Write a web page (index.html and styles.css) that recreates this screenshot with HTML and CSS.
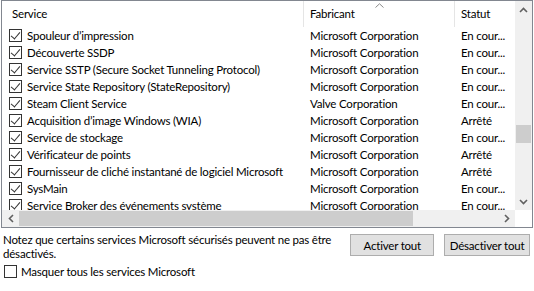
FILE: index.html
```html
<!DOCTYPE html>
<html lang="fr">
<head>
    <meta charset="UTF-8">
    <title>Services</title>
    <link rel="stylesheet" href="styles.css">
</head>
<body>

<div class="listbox">
    <div class="list">
        <div class="header">
            <div class="col col-name">Service</div>
            <div class="col col-maker">Fabricant
                <svg class="sort" width="9" height="5" viewBox="0 0 9 5"><path d="M0.5 4.5 L4.5 0.8 L8.5 4.5" fill="none" stroke="#8a8a8a" stroke-width="1"/></svg>
            </div>
            <div class="col col-state">Statut</div>
        </div>
        <div class="rows">
            <div class="row"><div class="col col-name"><span class="check on"></span>Spouleur d’impression</div><div class="col col-maker">Microsoft Corporation</div><div class="col col-state">En cour...</div></div>
            <div class="row"><div class="col col-name"><span class="check on"></span>Découverte SSDP</div><div class="col col-maker">Microsoft Corporation</div><div class="col col-state">En cour...</div></div>
            <div class="row"><div class="col col-name"><span class="check on"></span>Service SSTP (Secure Socket Tunneling Protocol)</div><div class="col col-maker">Microsoft Corporation</div><div class="col col-state">En cour...</div></div>
            <div class="row"><div class="col col-name"><span class="check on"></span>Service State Repository (StateRepository)</div><div class="col col-maker">Microsoft Corporation</div><div class="col col-state">En cour...</div></div>
            <div class="row"><div class="col col-name"><span class="check on"></span>Steam Client Service</div><div class="col col-maker">Valve Corporation</div><div class="col col-state">En cour...</div></div>
            <div class="row"><div class="col col-name"><span class="check on"></span>Acquisition d’image Windows (WIA)</div><div class="col col-maker">Microsoft Corporation</div><div class="col col-state">Arrêté</div></div>
            <div class="row"><div class="col col-name"><span class="check on"></span>Service de stockage</div><div class="col col-maker">Microsoft Corporation</div><div class="col col-state">En cour...</div></div>
            <div class="row"><div class="col col-name"><span class="check on"></span>Vérificateur de points</div><div class="col col-maker">Microsoft Corporation</div><div class="col col-state">Arrêté</div></div>
            <div class="row"><div class="col col-name"><span class="check on"></span>Fournisseur de cliché instantané de logiciel Microsoft</div><div class="col col-maker">Microsoft Corporation</div><div class="col col-state">Arrêté</div></div>
            <div class="row"><div class="col col-name"><span class="check on"></span>SysMain</div><div class="col col-maker">Microsoft Corporation</div><div class="col col-state">En cour...</div></div>
            <div class="row"><div class="col col-name"><span class="check on"></span>Service Broker des événements système</div><div class="col col-maker">Microsoft Corporation</div><div class="col col-state">En cour...</div></div>
        </div>
    </div>
    <div class="vscroll">
        <div class="arrow">
            <svg width="9" height="6" viewBox="0 0 9 6"><path d="M1 5 L4.5 1.5 L8 5" fill="none" stroke="#606060" stroke-width="1.6"/></svg>
        </div>
        <div class="vtrack"><div class="vthumb"></div></div>
        <div class="arrow">
            <svg width="9" height="6" viewBox="0 0 9 6"><path d="M1 1 L4.5 4.5 L8 1" fill="none" stroke="#606060" stroke-width="1.6"/></svg>
        </div>
    </div>
    <div class="hscroll">
        <div class="arrow">
            <svg width="6" height="9" viewBox="0 0 6 9"><path d="M5 1 L1.5 4.5 L5 8" fill="none" stroke="#606060" stroke-width="1.6"/></svg>
        </div>
        <div class="htrack"><div class="hthumb"></div></div>
        <div class="arrow">
            <svg width="6" height="9" viewBox="0 0 6 9"><path d="M1 1 L4.5 4.5 L1 8" fill="none" stroke="#606060" stroke-width="1.6"/></svg>
        </div>
    </div>
    <div class="corner"></div>
</div>

<div class="footer">
    <p class="note">Notez que certains services Microsoft sécurisés peuvent ne pas être désactivés.</p>
    <button class="btn">Activer tout</button>
    <button class="btn">Désactiver tout</button>
</div>

<label class="hide-ms"><span class="check"></span>Masquer tous les services Microsoft</label>

</body>
</html>
```

FILE: styles.css
```css
body {
    margin: 0;
    font-family: "Segoe UI", Lato, sans-serif;
    font-size: 11.5px;
    letter-spacing: -0.2px;
    color: #000;
    background: #fff;
}
.listbox {
    margin-left: 1px;
    width: 532px;
    height: 228px;
    box-sizing: border-box;
    border: 1px solid #828790;
    display: grid;
    grid-template-columns: 1fr 17px;
    grid-template-rows: 1fr 17px;
    overflow: hidden;
}
.list {
    overflow: hidden;
    min-width: 0;
}
.header {
    display: flex;
    height: 26px;
    line-height: 26px;
}
.header .col {
    border-right: 1px solid #e5e5e5;
    position: relative;
}
.header .col-name {
    padding-left: 10px;
}
.header .col-maker {
    padding-left: 6px;
}
.header .col-state {
    padding-left: 6px;
    border-right: none;
}
.sort {
    position: absolute;
    left: 71px;
    top: 2px;
}
.col {
    box-sizing: border-box;
    white-space: nowrap;
    overflow: hidden;
    flex-shrink: 0;
}
.col-name {
    width: 302px;
}
.col-maker {
    width: 151px;
}
.col-state {
    width: 80px;
}
.row {
    display: flex;
    height: 17px;
    line-height: 17px;
}
.row .col-name {
    display: flex;
    align-items: center;
    padding-left: 7px;
}
.row .col-maker {
    padding-left: 6px;
}
.row .col-state {
    padding-left: 6px;
}
.check {
    width: 13px;
    height: 13px;
    box-sizing: border-box;
    border: 1px solid #333;
    background: #fff;
    margin-right: 5px;
    flex-shrink: 0;
    position: relative;
}
.check.on::after {
    content: "";
    position: absolute;
    left: 3px;
    top: 0px;
    width: 4px;
    height: 8px;
    border: solid #333;
    border-width: 0 1px 1px 0;
    transform: rotate(40deg);
}
.vscroll {
    background: #f0f0f0;
    display: flex;
    flex-direction: column;
}
.vscroll .arrow {
    height: 17px;
    display: flex;
    align-items: center;
    justify-content: center;
}
.vtrack {
    flex: 1;
    padding-top: 107px;
}
.vthumb {
    margin: 0 1px;
    height: 18px;
    background: #cdcdcd;
}
.hscroll {
    background: #f0f0f0;
    display: flex;
}
.hscroll .arrow {
    width: 17px;
    display: flex;
    align-items: center;
    justify-content: center;
}
.htrack {
    flex: 1;
}
.hthumb {
    margin-top: 1px;
    width: 394px;
    height: 15px;
    background: #cdcdcd;
}
.corner {
    background: #fff;
}
.footer {
    display: flex;
    align-items: flex-start;
    padding: 6px 4px 0 3px;
}
.note {
    margin: 0;
    width: 340px;
    line-height: 14px;
    margin-top: -1px;
}
.btn {
    font: inherit;
    letter-spacing: inherit;
    color: #000;
    background: #e1e1e1;
    border: 1px solid #adadad;
    height: 22px;
    padding: 0;
    margin-left: 8px;
    width: 84px;
    white-space: nowrap;
}
.btn + .btn {
    margin-left: 10px;
    width: 86px;
}
.hide-ms {
    display: flex;
    align-items: center;
    margin: 4px 0 0 4px;
}
.hide-ms .check {
    margin-right: 4px;
}
```
